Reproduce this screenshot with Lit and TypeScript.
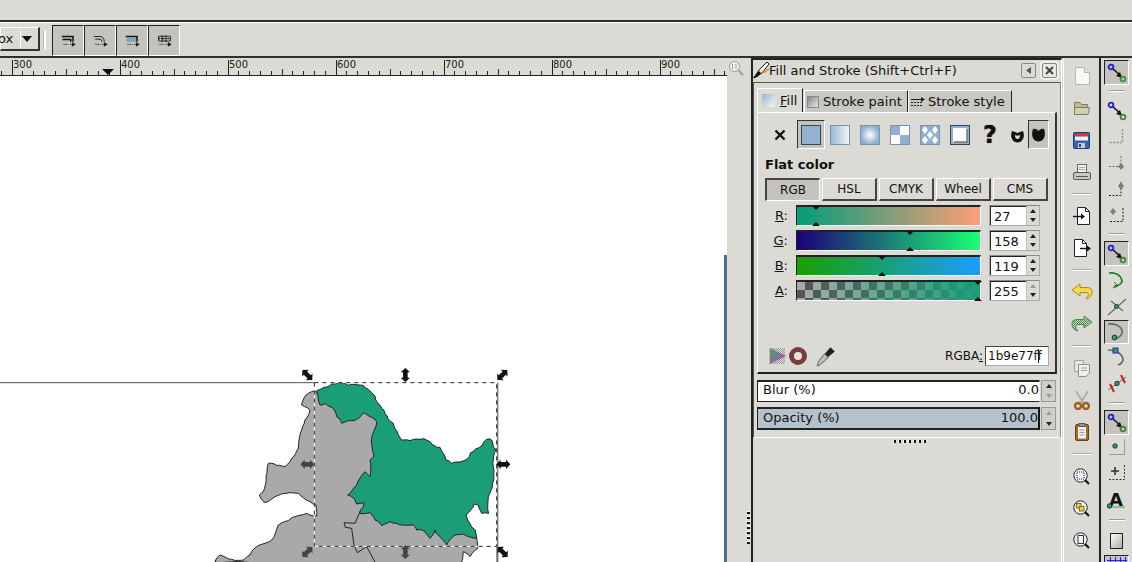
import { LitElement, html, css, svg } from "lit";
import { customElement } from "lit/decorators.js";

const GREEN = "M350,92 L372,82 395,72 420,68 445,76 470,74 490,76 505,88 515,98 525,108 530,125 545,145 555,160 565,178 580,190 592,215 605,240 630,242 660,238 672,236 690,245 705,258 720,262 730,280 738,300 755,310 780,306 800,298 812,278 825,268 845,258 860,238 875,240 880,262 888,268 880,300 882,330 878,370 865,410 866,460 845,460 835,435 822,432 812,450 798,465 810,490 826,510 830,535 790,522 765,525 740,555 720,530 705,510 690,535 670,512 650,510 640,495 610,495 590,490 570,485 545,497 525,480 510,458 478,460 490,440 492,428 470,432 465,420 443,405 470,375 495,335 510,350 510,300 522,288 515,235 530,185 510,170 490,158 470,178 445,182 425,190 410,170 400,145 375,130 360,135 Z";
const GREY = "M345,92 L325,100 310,120 305,135 330,150 315,180 305,210 295,265 275,295 255,320 230,316 205,310 198,350 190,395 178,405 195,428 225,410 260,400 295,400 330,425 348,435 350,468 320,460 290,468 265,482 235,495 215,540 170,560 150,585 130,600 95,598 60,585 45,606 785,620 785,606 790,575 810,590 833,565 830,535 700,420 600,300 540,200 480,120 400,105 360,105 Z";

/* Turn a straight polygon into a rugged boundary line, always the same way. */
function roughen(d: string, amp: number): string {
  const nums = d.match(/-?\d+(\.\d+)?/g)!.map(Number);
  const pts: [number, number][] = [];
  for (let i = 0; i < nums.length; i += 2) pts.push([nums[i], nums[i + 1]]);
  pts.push(pts[0]);
  let out = `M${pts[0][0]},${pts[0][1]}`;
  let k = 1;
  for (let i = 1; i < pts.length; i++) {
    const [ax, ay] = pts[i - 1];
    const [bx, by] = pts[i];
    const len = Math.hypot(bx - ax, by - ay) || 1;
    const n = Math.max(1, Math.round(len / 10));
    const nx = -(by - ay) / len;
    const ny = (bx - ax) / len;
    for (let j = 1; j <= n; j++) {
      const t = j / n;
      const off = j === n ? 0 : Math.sin(k * 12.9898) * amp;
      k++;
      out += ` L${(ax + (bx - ax) * t + nx * off).toFixed(1)},${(ay + (by - ay) * t + ny * off).toFixed(1)}`;
    }
  }
  return out + " Z";
}

const dk = "#111";
const arr = (x: number, y: number, rot: number, color: string) =>
  svg`<g transform="translate(${x} ${y}) rotate(${rot})" fill="${color}">
    <path d="M-21,0 L-8,-14 L-8,-7 L8,-7 L8,-14 L21,0 L8,14 L8,7 L-8,7 L-8,14 Z"></path></g>`;

const ruler = () => {
  const ticks = [];
  for (let i = 0; i < 68; i++) {
    const x = 0.2 + i * 10.8 + 0.5;
    const major = (i - 1) % 10 === 0;
    const mid = (i - 1) % 5 === 0 && !major;
    ticks.push(svg`<rect x=${Math.round(x)} y=${major ? 2 : mid ? 11 : 13} width="1" height=${major ? 15 : mid ? 6 : 4} fill="#222"></rect>`);
  }
  return svg`<svg class="ruler-svg" width="727" height="18">${ticks}<path d="M102,11 L114,11 L108,17 Z" fill="#111"></path></svg>`;
};

const pathToolIcon = (n: number) => {
  const head = svg`<path d="M3,13.5 H10 M12,13.5 H16 M15,11 L19,13.5 L15,16 Z" stroke="#111" fill="#111" stroke-dasharray="2 1"></path>`;
  const tops = [
    svg`<path d="M1,3 H16 V10 M2,7 H13 V10" fill="none" stroke="#111" stroke-width="2"></path>`,
    svg`<path d="M1,3 H9 Q15,3 15,10 M3,6.5 H8 Q12,6.5 12,10" fill="none" stroke="#222" stroke-width="1.3"></path>`,
    svg`<path d="M2,5 H15 V10 H2 Z" fill="#7da3cc"></path><path d="M1,3 H16 V10" fill="none" stroke="#111" stroke-width="2"></path>`,
    svg`<path d="M2,2.5 H18 V9 H2 Z" fill="none" stroke="#111"></path><path d="M2,5.5 H18 M7,2 V10 M12,2 V10" stroke="#111" stroke-width="2" stroke-dasharray="2 1"></path>`,
  ];
  return svg`<svg width="15" height="14" viewBox="0 0 20 18">${tops[n]}${head}</svg>`;
};

const paintIcons: Record<string, any> = {
  x: svg`<svg width="14" height="14" viewBox="0 0 14 14"><path d="M2.5,2.5 L11.5,11.5 M11.5,2.5 L2.5,11.5" stroke="#111" stroke-width="2.4"></path></svg>`,
  flat: svg`<svg width="20" height="20"><rect x=".5" y=".5" width="19" height="19" fill="#93b1d0" stroke="#33475c"></rect></svg>`,
  lin: svg`<svg width="20" height="20"><defs><linearGradient id="pl"><stop offset="0" stop-color="#9ab6d3"></stop><stop offset="1" stop-color="#f4f7fa"></stop></linearGradient></defs><rect x=".5" y=".5" width="19" height="19" fill="url(#pl)" stroke="#7a93ad"></rect></svg>`,
  rad: svg`<svg width="20" height="20"><defs><radialGradient id="pr"><stop offset="0" stop-color="#fff"></stop><stop offset="1" stop-color="#8eaecf"></stop></radialGradient></defs><rect x=".5" y=".5" width="19" height="19" fill="url(#pr)" stroke="#7a93ad"></rect></svg>`,
  mesh: svg`<svg width="20" height="20"><rect width="20" height="20" fill="#fff"></rect><rect width="10" height="10" fill="#8fb0d2"></rect><rect x="10" y="10" width="10" height="10" fill="#8fb0d2"></rect><rect x=".5" y=".5" width="19" height="19" fill="none" stroke="#7a93ad"></rect></svg>`,
  pat: svg`<svg width="20" height="20"><rect width="20" height="20" fill="#8fb0d2"></rect><path d="M5,1 L8,5 L5,9 L2,5 Z M15,1 L18,5 L15,9 L12,5 Z M10,6 L13,10 L10,14 L7,10 Z M5,11 L8,15 L5,19 L2,15 Z M15,11 L18,15 L15,19 L12,15 Z" fill="#fff"></path><rect x=".5" y=".5" width="19" height="19" fill="none" stroke="#7a93ad"></rect></svg>`,
  swatch: svg`<svg width="20" height="20"><rect x=".5" y=".5" width="19" height="19" fill="#8fb0d2" stroke="#33475c"></rect><rect x="3" y="3" width="14" height="14" fill="#fff"></rect><path d="M4,17 H17 V4" fill="none" stroke="#777" stroke-width="1.5"></path></svg>`,
  even: svg`<svg width="13" height="13" viewBox="0 0 13 13"><path fill-rule="evenodd" d="M1,1 L4,2 L6.5,3 L9,2 L12,1 C13.5,5 13,8 11,10.5 C9,13 4,13 2,10.5 C0,8 -.5,5 1,1 Z M4.2,5 C3.8,7 4.6,9 6.5,9 C8.4,9 9.2,7 8.8,5 L6.5,5.8 Z" fill="#111"></path></svg>`,
  nz: svg`<svg width="13" height="14" viewBox="0 0 13 14"><path d="M1,1 C3,.5 5,1.5 6.5,3 C8,1.5 10,.5 12,1 C13.5,5 13,9 11,11.5 C9,14 4,14 2,11.5 C0,9 -.5,5 1,1 Z" fill="#111"></path></svg>`,
};

const cmdIcons: Record<string, any> = {
  new: svg`<svg width="16" height="18" viewBox="0 0 16 18"><path d="M1.5,.5 H10.5 L15.5,5.5 V17.5 H1.5 Z" fill="#f8f8f6" stroke="#b5b5ae"></path><path d="M10.5,.5 V5.5 H15.5" fill="#e3e3de" stroke="#b5b5ae"></path></svg>`,
  open: svg`<svg width="18" height="15" viewBox="0 0 18 15"><path d="M1.5,1.5 H7 L8.5,3.5 H14.5 V13.5 H1.5 Z" fill="#b9bd93" stroke="#7b7e62"></path><path d="M1.5,6.5 H16.5 L15,13.5 H1.5 Z" fill="#cfd2ad" stroke="#7b7e62"></path></svg>`,
  save: svg`<svg width="17" height="17" viewBox="0 0 17 17"><rect x=".5" y=".5" width="16" height="16" rx="1" fill="#3465a4" stroke="#1d3f70"></rect><rect x="2" y="1.5" width="13" height="3" fill="#d33"></rect><rect x="2" y="4.5" width="13" height="4" fill="#eee"></rect><rect x="5" y="11" width="7" height="5" fill="#ccc"></rect><rect x="6" y="12" width="2" height="3" fill="#345"></rect></svg>`,
  print: svg`<svg width="18" height="17" viewBox="0 0 18 17"><rect x="4.5" y=".5" width="9" height="8" fill="#f2f2f0" stroke="#666"></rect><path d="M6,3.5 H12 M6,5.5 H12" stroke="#aaa"></path><rect x=".5" y="8.5" width="17" height="7" rx="1.5" fill="#c9c9c4" stroke="#555"></rect><path d="M3,12.5 H15" stroke="#555"></path></svg>`,
  imp: svg`<svg width="18" height="18" viewBox="0 0 18 18"><path d="M4.5,.5 H12.5 L16.5,4.5 V17.5 H4.5 Z" fill="#fff" stroke="#222"></path><path d="M12.5,.5 V4.5 H16.5" fill="none" stroke="#222"></path><path d="M0,9.5 H10" stroke="#111" stroke-width="1.4"></path><path d="M8,6.5 L12,9.5 L8,12.5 Z" fill="#111"></path></svg>`,
  exp: svg`<svg width="18" height="18" viewBox="0 0 18 18"><path d="M1.5,.5 H9.5 L13.5,4.5 V17.5 H1.5 Z" fill="#fff" stroke="#222"></path><path d="M9.5,.5 V4.5 H13.5" fill="none" stroke="#222"></path><path d="M7,9.5 H15" stroke="#111" stroke-width="1.4"></path><path d="M14,6.5 L18,9.5 L14,12.5 Z" fill="#111"></path></svg>`,
  undo: svg`<svg width="22" height="18" viewBox="0 0 22 18"><path d="M9,1 L1,7 L9,13 V9.5 H15 C17,9.5 18,11 17,13 L15,16 C20,15 21.5,11 21,8 C20.5,5 18,4.5 15,4.5 H9 Z" fill="#f5d949" stroke="#a88a1a"></path></svg>`,
  redo: svg`<svg width="22" height="18" viewBox="0 0 22 18"><defs><pattern id="rd" width="2" height="2" patternUnits="userSpaceOnUse"><rect width="2" height="2" fill="#dbdad5"></rect><rect width="1" height="1" fill="#3f8a3f"></rect><rect x="1" y="1" width="1" height="1" fill="#3f8a3f"></rect></pattern></defs><path d="M13,1 L21,7 L13,13 V9.5 H7 C5,9.5 4,11 5,13 L7,16 C2,15 .5,11 1,8 C1.5,5 4,4.5 7,4.5 H13 Z" fill="url(#rd)" stroke="#4d8a4d"></path></svg>`,
  dup: svg`<svg width="18" height="18" viewBox="0 0 18 18" opacity=".55"><path d="M1.5,1.5 H10.5 V12.5 H1.5 Z" fill="#eee" stroke="#777"></path><path d="M5.5,5.5 H16.5 V14 L13,17.5 H5.5 Z" fill="#fff" stroke="#555"></path><path d="M8,9 H14 M8,11.5 H14" stroke="#777"></path></svg>`,
  cut: svg`<svg width="16" height="20" viewBox="0 0 16 20"><path d="M2,1 L10,14 M14,1 L6,14" stroke="#aaa" stroke-width="1.6"></path><circle cx="4" cy="16" r="3" fill="none" stroke="#a0601a" stroke-width="2.4"></circle><circle cx="12" cy="16" r="3" fill="none" stroke="#a0601a" stroke-width="2.4"></circle></svg>`,
  paste: svg`<svg width="14" height="18" viewBox="0 0 14 18"><rect x=".5" y="1.5" width="13" height="16" rx="1.5" fill="#a5692a" stroke="#6b4216"></rect><path d="M3,3.5 H11 V15.5 H3 Z" fill="#f2f2f0"></path><path d="M4.5,7 H9.5 M4.5,9.5 H9.5 M4.5,12 H9.5" stroke="#999"></path><rect x="4" y=".5" width="6" height="3" fill="#999" stroke="#555"></rect></svg>`,
  zsel: svg`<svg width="17" height="17" viewBox="0 0 17 17"><circle cx="7.5" cy="7.5" r="6.7" fill="#eef1f4" stroke="#222"></circle><rect x="4" y="4" width="7" height="7" fill="none" stroke="#222" stroke-dasharray="1 1"></rect><path d="M12,12 L16,16" stroke="#111" stroke-width="2.2"></path></svg>`,
  zdraw: svg`<svg width="17" height="17" viewBox="0 0 17 17"><circle cx="7.5" cy="7.5" r="6.7" fill="#eef1f4" stroke="#222"></circle><rect x="3.5" y="3.5" width="4.5" height="4.5" fill="#e5c94a" stroke="#8a6b10"></rect><rect x="6.5" y="6.5" width="4.5" height="4.5" fill="#e5c94a" stroke="#8a6b10"></rect><path d="M12,12 L16,16" stroke="#111" stroke-width="2.2"></path></svg>`,
  zpage: svg`<svg width="17" height="17" viewBox="0 0 17 17"><circle cx="7.5" cy="7.5" r="6.7" fill="#eef1f4" stroke="#222"></circle><rect x="5" y="3.5" width="5.5" height="8" fill="#fff" stroke="#333"></rect><path d="M12,12 L16,16" stroke="#111" stroke-width="2.2"></path></svg>`,
};

const nodePair = (a: string, b: string) => svg`<svg width="20" height="20" viewBox="0 0 20 20"><path d="M5,5 L14,13" stroke="#111" stroke-width="1.5"></path><path d="M15,15 L9,13 L13,9 Z" fill="#111"></path><circle cx="4" cy="4" r="2.4" fill="none" stroke=${a} stroke-width="1.8"></circle><circle cx="16" cy="16" r="2.4" fill="none" stroke=${b} stroke-width="1.8"></circle></svg>`;

const snapIcons: Record<string, any> = {
  pair: nodePair("#2020d8", "#3a8a3a"),
  bbox: svg`<svg width="20" height="20" viewBox="0 0 20 20"><path d="M15.5,2 V15.5 H2" fill="none" stroke="#7d9a7d" stroke-dasharray="2 1.5" stroke-width="1.3"></path></svg>`,
  bedge: svg`<svg width="20" height="20" viewBox="0 0 20 20"><path d="M2,12.5 H14 M14,2 V11" fill="none" stroke="#667" stroke-dasharray="2 1.5"></path><path d="M14,9 L17,12.5 L14,16 L11,12.5 Z" fill="#6a8a6a"></path></svg>`,
  bcorner: svg`<svg width="20" height="20" viewBox="0 0 20 20"><path d="M2,15.5 H14 V2" fill="none" stroke="#222" stroke-dasharray="2 1.5"></path><path d="M14,2 L17,6 L14,10 L11,6 Z" fill="#6a8a6a"></path></svg>`,
  bmid: svg`<svg width="20" height="20" viewBox="0 0 20 20"><path d="M3,16.5 H16 V3" fill="none" stroke="#222" stroke-dasharray="2 1.5"></path><path d="M6,3 L9,6.5 L6,10 L3,6.5 Z" fill="#6a8a6a"></path></svg>`,
  path: svg`<svg width="20" height="20" viewBox="0 0 20 20"><path d="M2,4 C8,3 14,6 15,12 C15,15 11,17 7,17" fill="none" stroke="#1c7a1c" stroke-width="1.7"></path><path d="M7,13 L11,17 L6,19" fill="none" stroke="#1c7a1c"></path></svg>`,
  inter: svg`<svg width="20" height="20" viewBox="0 0 20 20"><path d="M1,19 L19,3 M4,5 L16,15" stroke="#666" stroke-width="1.2"></path><circle cx="9.5" cy="10.5" r="2" fill="#3a9a5a" stroke="#135"></circle></svg>`,
  node: svg`<svg width="20" height="20" viewBox="0 0 20 20"><path d="M1,2 C9,1 16,5 15,11 C14,15 10,17 6,16" fill="none" stroke="#666" stroke-width="1.7"></path><circle cx="7.5" cy="15.5" r="2.4" fill="#3a9a5a" stroke="#135"></circle></svg>`,
  smooth: svg`<svg width="20" height="20" viewBox="0 0 20 20"><path d="M1,3 C8,3 15,6 16,12 C16,15 14,17 11,18" fill="none" stroke="#666" stroke-width="1.7"></path><rect x="6" y="1" width="5" height="5" fill="#3a9a5a" stroke="#2828c8"></rect></svg>`,
  mid: svg`<svg width="20" height="20" viewBox="0 0 20 20"><path d="M1,17 L19,4" stroke="#666"></path><path d="M3,11 L7,19 M14,2 L18,10" stroke="#c82020" stroke-width="2"></path><circle cx="10" cy="10.5" r="2.2" fill="#3a9a5a" stroke="#135"></circle></svg>`,
  center: svg`<svg width="20" height="20" viewBox="0 0 20 20"><path d="M2,17.5 H17.5 V2" fill="none" stroke="#999"></path><circle cx="8" cy="9" r="2.2" fill="#3a9a5a" stroke="#135"></circle></svg>`,
  rot: svg`<svg width="20" height="20" viewBox="0 0 20 20"><path d="M2,17.5 H17.5 V2" fill="none" stroke="#333" stroke-dasharray="2 1.5"></path><path d="M4,9 H12 M8,5 V13" stroke="#333" stroke-width="1.6"></path></svg>`,
  text: svg`<svg width="24" height="24" viewBox="0 0 24 24"><text x="4" y="18" class="big-a">A</text><path d="M4,19 H20" stroke="#3a9a5a"></path><circle cx="4.5" cy="18" r="2.2" fill="#3a9a5a" stroke="#135"></circle></svg>`,
  page: svg`<svg width="13" height="16" viewBox="0 0 13 16"><defs><linearGradient id="pg" x1="0" x2="1" y1="0" y2="1"><stop offset="0" stop-color="#fff"></stop><stop offset="1" stop-color="#aaa"></stop></linearGradient></defs><rect x=".5" y=".5" width="12" height="15" fill="url(#pg)" stroke="#222"></rect></svg>`,
  grid: svg`<svg width="20" height="12" viewBox="0 0 20 12"><path d="M0,3.5 H20 M0,8.5 H20 M3.5,0 V12 M8.5,0 V12 M13.5,0 V12 M18.5,0 V12" stroke="#2020e0"></path></svg>`,
};

@customElement("app-root")
export class AppRoot extends LitElement {
  static styles = css`
    :host { display: block; width: 1132px; height: 562px; overflow: hidden; background: #dbdad5;
      font-family: "DejaVu Sans", sans-serif; font-size: 13px; color: #111; }
    .top { height: 20px; border-bottom: 2px solid #2e2e2c; }
    .toolbar { height: 33px; border-top: 1px solid #fff; border-bottom: 2px solid #2e2e2c; display: flex; align-items: flex-start; background: #dbdad5; }
    .combo { margin-top: 4px; width: 40px; height: 24px; box-sizing: border-box; border: 1px solid #fff; border-right: 2px solid #333; border-bottom: 2px solid #333; display: flex; align-items: center; justify-content: space-between; padding: 0 6px 0 0; }
    .combo .tx { margin-left: -3px; }
    .combo .sp { width: 1px; height: 16px; background: #fff; margin-left: 5px; }
    .combo .tri { width: 0; height: 0; border: 5px solid transparent; border-top: 6px solid #111; border-bottom: 0; }
    .tsep { width: 2px; height: 20px; background: #fff; border-left: 1px solid #bbb; margin: 7px 6px 0 3px; }
    .tbtn { width: 32px; height: 31px; box-sizing: border-box; margin-top: 2px; background: #c4c3be; border: 1px solid #fff; border-top-color: #222; border-left-color: #222; display: flex; align-items: center; justify-content: center; }
    .main { height: 504px; display: flex; }
    .canvas-col { width: 727px; flex: none; display: flex; flex-direction: column; position: relative; }
    .ruler { height: 17px; position: relative; border-bottom: 1px solid #222; overflow: hidden; flex: none; }
    .ruler-svg { position: absolute; left: 0; top: 0; }
    .rl { position: absolute; top: 1px; font-size: 10px; line-height: 12px; color: #222; }
    .canvas { flex: 1; background: #fff; position: relative; overflow: hidden; }
    .canvas .scroll { position: absolute; right: 0; top: 179px; width: 3px; bottom: 0; background: #4b6c94; }
    .map { position: absolute; left: 200px; top: 284px; overflow: visible; }
    .gutter { width: 24px; flex: none; position: relative; }
    .zoom-ic { position: absolute; left: 1px; top: 2px; }
    .grip { position: absolute; right: 1px; top: 453px; width: 3px; height: 35px;
      background: repeating-linear-gradient(#fff 0 1px, #111 1px 3px, transparent 3px 5px); }
    .dialog { width: 311px; flex: none; box-sizing: border-box; border-top: 2px solid #222; border-left: 2px solid #222; border-right: 1px solid #fff; display: flex; flex-direction: column; height: 504px; }
    .title { height: 20px; display: flex; align-items: center; flex: none; }
    .title .app { margin-left: -1px; }
    .title .t { margin-left: -1px; flex: 1; white-space: nowrap; }
    .wbtn { width: 13px; height: 13px; border: 1px solid #888; border-radius: 2px; display: flex; align-items: center; justify-content: center; margin-right: 6px; }
    .wbtn.close { width: 13px; height: 13px; margin-right: 4px; background: #e9e8e4; box-shadow: 0 0 0 2px #eeeeea; }
    .frame { margin: 2px 0 0 0; border: 1px solid #555; border-right-color: #8a8a86; border-bottom-color: #fff; padding: 5px 0 0 3px; display: flex; flex-direction: column; height: 356px; box-sizing: border-box; flex: none; }
    .tabs { display: flex; height: 24px; align-items: flex-end; flex: none; }
    .tab { display: flex; align-items: center; height: 22px; width: 104px; flex: none; box-sizing: border-box; border: 1px solid #fff; border-right: 1px solid #222; border-bottom: 0; gap: 2px; padding: 0 0 0 2px; background: #c9c8c3; white-space: nowrap; }
    .tab.on { background: #dbdad5; height: 24px; padding: 0 0 0 4px; gap: 5px; width: 46px; margin-right: 1px; }
    u { text-decoration-thickness: 1px; }
    .tab .sw1 { width: 13px; height: 13px; background: linear-gradient(135deg,#9ab6d3,#f2f5f8); }
    .tab .sw2 { width: 12px; height: 12px; background: linear-gradient(135deg,#888,#e6e6e2); border: 1px solid #888; box-sizing: border-box; margin-right: 2px; }
    .tab .ssty { margin-right: 1px; }
    .panel { height: 262px; flex: none; box-sizing: border-box; border: 1px solid #fff; border-right: 2px solid #333; border-bottom: 2px solid #222; padding: 7px 5px 0 7px; width: 300px; display: flex; flex-direction: column; }
    .paints { display: flex; align-items: center; height: 29px; flex: none; }
    .pc { width: 30px; height: 28px; display: flex; align-items: center; justify-content: center; flex: none; box-sizing: border-box; }
    .pc.x { width: 28px; margin-left: 1px; }
    .pc.on { height: 29px; background: #c4c3be; border: 1px solid #fff; border-top-color: #333; border-left-color: #333; }
    .pc.flat { margin-left: 3px; width: 28px; }
    .pc.q { font-size: 24px; font-weight: bold; line-height: 28px; text-shadow: 0 0 1px #333; }
    .pc.u { width: 24px; padding-top: 3px; }
    .pc.nz { width: 21px; margin-left: -1px; }
    .flatlbl { font-weight: bold; margin-top: 8px; line-height: 16px; height: 16px; flex: none; }
    .modes { display: flex; gap: 2px; margin-top: 5px; flex: none; }
    .mode { width: 55px; height: 23px; flex: none; box-sizing: border-box; border: 1px solid #fff; border-right: 2px solid #444; border-bottom: 2px solid #444; display: flex; align-items: center; justify-content: center; font-size: 12px; }
    .mode.on { background: #c4c3be; border-color: #fff; border-top: 2px solid #444; border-left: 2px solid #444; border-right: 1px solid #fff; border-bottom: 1px solid #fff; }
    .rows { margin-top: 4px; display: flex; flex-direction: column; gap: 4px; flex: none; }
    .row { display: flex; align-items: center; height: 21px; }
    .lab { width: 31px; text-align: right; padding-right: 8px; flex: none; box-sizing: border-box; }
    .slider { width: 185px; height: 21px; box-sizing: border-box; margin-right: 8px; border: 1px solid #fff; border-top: 2px solid #222; border-left: 1px solid #222; position: relative; flex: none; }
    .slider.r { background: linear-gradient(90deg,#009e78,#ff9e78); }
    .slider.g { background: linear-gradient(90deg,#1b0077,#1bff77); }
    .slider.b { background: linear-gradient(90deg,#1b9e00,#1b9eff); }
    .slider.a { background: linear-gradient(90deg,rgba(27,158,119,0),#1b9e77),
      repeating-conic-gradient(#555 0 25%, #aaa 0 50%) 0 0 / 16px 16px; }
    .mk { position: absolute; width: 0; height: 0; border: 4px solid transparent; transform: translateX(-4px); }
    .mk.t { top: -1px; border-top: 4px solid #111; border-bottom: 0; }
    .mk.bm { bottom: -1px; border-bottom: 4px solid #111; border-top: 0; }
    .spin { width: 51px; height: 21px; box-sizing: border-box; border: 1px solid #aaa; border-top-color: #888; display: flex; flex: none; background: #fff; }
    .spin .v { flex: 1; padding-left: 3px; line-height: 19px; border-left: 1px solid #222; border-top: 1px solid #222; }
    .arrows { width: 12px; flex: none; background: #dbdad5; display: flex; flex-direction: column; align-items: center; justify-content: space-around; border-left: 1px solid #bbb; }
    .a-up { width: 0; height: 0; border: 3px solid transparent; border-bottom: 4px solid #222; border-top: 0; }
    .a-dn { width: 0; height: 0; border: 3px solid transparent; border-top: 4px solid #222; border-bottom: 0; }
    .a-up.dim { border-bottom-color: #999; }
    .a-dn.dim { border-top-color: #999; }
    .bottom { margin-top: auto; margin-bottom: 5px; display: flex; align-items: center; height: 22px; padding-left: 3px; flex: none; }
    .bottom .ri { font-size: 12px; margin-left: auto; margin-right: 2px; }
    .bottom .drop { margin-left: 7px; }
    .hexin { width: 64px; height: 20px; box-sizing: border-box; background: #fff; border: 1px solid #aaa; border-top-color: #444; border-left-color: #444; line-height: 18px; padding-left: 2px; font-size: 12px; position: relative; margin-right: 1px; }
    .caret { position: absolute; left: 52px; top: 2px; width: 1px; height: 14px; background: #111; }
    .wide { display: flex; margin-top: 5px; width: 299px; flex: none; height: 23px; }
    .wide.first { margin-top: 6px; height: 22px; }
    .wide .box { flex: 1; box-sizing: border-box; background: #fff; border: 1px solid #222; border-top-width: 2px; border-right-color: #fff; display: flex; justify-content: space-between; padding: 0 0 0 5px; line-height: 15px; white-space: nowrap; }
    .wide .box.fill { background: #b5c1cb; border-right: 2px solid #111; border-bottom-width: 2px; line-height: 17px; }
    .wide .arrows { width: 13px; border: 1px solid #999; background: #cfcec9; margin-left: 1px; flex: none; }
    .handle { height: 3px; margin: 2px 0 0 140px; width: 33px; flex: none;
      background: repeating-linear-gradient(90deg,#fff 0 1px,#111 1px 3px,transparent 3px 5px); }
    .cmd { width: 36px; flex: none; margin-left: 1px; border-left: 1px solid #fff; display: flex; flex-direction: column; align-items: center; padding-top: 2px; box-sizing: border-box; height: 504px; overflow: hidden; }
    .ci { height: 32px; flex: none; display: flex; align-items: center; justify-content: center; width: 100%; }
    .csep { height: 12px; flex: none; width: 20px; display: flex; align-items: center; }
    .csep::after { content: ""; display: block; width: 100%; height: 1px; background: #fff; border-top: 1px solid #aaa; }
    .snap { flex: 1; border-left: 2px solid #222; display: flex; flex-direction: column; align-items: center; box-sizing: border-box; height: 504px; overflow: hidden; padding-top: 2px; }
    .si { flex: none; width: 25px; display: flex; align-items: center; justify-content: center; box-sizing: border-box; }
    .si.on { background: #c4c3be; border: 1px solid #fff; border-top-color: #222; border-left-color: #222; }
    .ssep { flex: none; width: 16px; height: 0; border-top: 1px solid #999; border-bottom: 1px solid #fff; align-self: center; }
    .big-a { font: bold 18px "DejaVu Sans", sans-serif; fill: #111; }
  `;

  private renderSlider(cls: string, ch: string, pos: number, val: string, dimUp = false) {
    return html`<div class="row">
      <div class="lab"><u>${ch}</u>:</div>
      <div class="slider ${cls}">
        <div class="mk t" style="left:${pos}%"></div><div class="mk bm" style="left:${pos}%"></div>
      </div>
      <div class="spin"><div class="v">${val}</div><div class="arrows"><div class="a-up ${dimUp ? "dim" : ""}"></div><div class="a-dn"></div></div></div>
    </div>`;
  }

  render() {
    const cmd = ["new","open","save","print","-","imp","exp","-","undo","redo","-","dup","cut","paste","-","zsel","zdraw","zpage"];
    const snap: [string, number, boolean][] = [
      ["pair",25,true],["-",12,false],["pair",27,false],["bbox",26,false],["bedge",27,false],["bcorner",25,false],["bmid",25,false],
      ["-",14,false],["pair",25,true],["path",26,false],["inter",28,false],["node",24,true],["smooth",26,false],["mid",26,false],
      ["-",14,false],["pair",25,true],["center",23,false],["rot",28,false],["text",27,false],["-",14,false],["page",28,false],["grid",16,true],
    ];
    const labels = [[300,11],[400,119],[500,227],[600,335],[700,443],[800,551],[900,659]];
    return html`
      <div class="top"></div>
      <div class="toolbar">
        <div class="combo"><span class="tx">ox</span><span class="sp"></span><span class="tri"></span></div>
        <div class="tsep"></div>
        ${[0,1,2,3].map(i => html`<div class="tbtn">${pathToolIcon(i)}</div>`)}
      </div>
      <div class="main">
        <div class="canvas-col">
          <div class="ruler">${ruler()}${labels.map(([t,x]) => html`<span class="rl" style="left:${x + 2}px">${t}</span>`)}</div>
          <div class="canvas">
            <svg class="map" width="320" height="202" viewBox="0 0 960 606">
              <path d="M-600,68 H342" stroke="#555" stroke-width="3" fill="none"></path>
              <path d="M892,68 V606" stroke="#666" stroke-width="6" fill="none"></path>
              <path d=${roughen(GREY, 2.5)} fill="#a9a9a9" stroke="#222" stroke-width="3" stroke-linejoin="round"></path>
              <path d="M478,460 L465,490 L432,488 L436,502 L455,505 L462,555 L472,578 L500,560 L525,606" fill="none" stroke="#222" stroke-width="3"></path>
              <path d=${roughen(GREEN, 2.5)} fill="#1b9e77" stroke="#222" stroke-width="3" stroke-linejoin="round"></path>
              <rect x="343" y="68" width="547" height="491" fill="none" stroke="#fff" stroke-width="3"></rect>
              <rect x="343" y="68" width="547" height="491" fill="none" stroke="#222" stroke-width="3" stroke-dasharray="12 12"></rect>
              ${arr(322,45,45,dk)}${arr(616,45,90,dk)}${arr(907,45,135,dk)}
              ${arr(322,313,0,"#444")}${arr(910,313,0,dk)}
              ${arr(322,576,135,"#444")}${arr(616,576,90,"#444")}${arr(908,576,45,dk)}
            </svg>
            <div class="scroll"></div>
          </div>
        </div>
        <div class="gutter">
          <svg class="zoom-ic" width="16" height="16" viewBox="0 0 16 16"><circle cx="6.5" cy="6.5" r="5" fill="#f2f2f0" stroke="#999"></circle><path d="M10.5,10.5 L15,15" stroke="#999" stroke-width="2"></path><path d="M4.5,4 V9 M8,4 V9" stroke="#999"></path></svg>
          <div class="grip"></div>
        </div>
        <div class="dialog">
          <div class="title">
            <svg class="app" width="18" height="18" viewBox="0 0 18 18"><path d="M2,17 L7,9 L15,1 L17,3 L10,12 Z" fill="#fff" stroke="#111"></path><path d="M1,17 C3,14 5,12 7,10 L9,12 C7,15 4,17 1,17 Z" fill="#111"></path><path d="M11,12 L17,8" stroke="#d9a520" stroke-width="2"></path></svg>
            <span class="t">Fill and Stroke (Shift+Ctrl+F)</span>
            <div class="wbtn"><svg width="7" height="7"><path d="M6,0 L1,3.5 L6,7 Z" fill="#555"></path></svg></div>
            <div class="wbtn close"><svg width="9" height="9"><path d="M1,1 L8,8 M8,1 L1,8" stroke="#444" stroke-width="2"></path></svg></div>
          </div>
          <div class="frame">
            <div class="tabs">
              <div class="tab on"><span class="sw1"></span><span><u>F</u>ill</span></div>
              <div class="tab"><span class="sw2"></span><span>Stroke paint</span></div>
              <div class="tab"><svg class="ssty" width="14" height="12" viewBox="0 0 14 12"><path d="M0,3.5 H12" stroke="#222"></path><path d="M0,6.5 H12 M0,9.5 H12" stroke="#222" stroke-dasharray="2 1"></path><path d="M10,1 L14,3.5 L10,6 Z" fill="#222"></path></svg><span>Stroke style</span></div>
            </div>
            <div class="panel">
              <div class="paints">
                <div class="pc x">${paintIcons.x}</div>
                <div class="pc on flat">${paintIcons.flat}</div>
                <div class="pc">${paintIcons.lin}</div>
                <div class="pc">${paintIcons.rad}</div>
                <div class="pc">${paintIcons.mesh}</div>
                <div class="pc">${paintIcons.pat}</div>
                <div class="pc">${paintIcons.swatch}</div>
                <div class="pc q">?</div>
                <div class="pc u">${paintIcons.even}</div>
                <div class="pc on nz">${paintIcons.nz}</div>
              </div>
              <div class="flatlbl">Flat color</div>
              <div class="modes">
                <div class="mode on">RGB</div><div class="mode">HSL</div><div class="mode">CMYK</div><div class="mode">Wheel</div><div class="mode">CMS</div>
              </div>
              <div class="rows">
                ${this.renderSlider("r","R",10.5,"27")}
                ${this.renderSlider("g","G",62,"158")}
                ${this.renderSlider("b","B",46.5,"119")}
                ${this.renderSlider("a","A",99,"255",true)}
              </div>
              <div class="bottom">
                <svg width="20" height="20" viewBox="0 0 20 20"><defs><pattern id="ck" width="2" height="2" patternUnits="userSpaceOnUse"><rect width="2" height="2" fill="#dbdad5"></rect><rect width="1" height="1" fill="#999"></rect><rect x="1" y="1" width="1" height="1" fill="#999"></rect></pattern><linearGradient id="tg" x1="0" x2="1" y1="0" y2="1"><stop offset="0" stop-color="#2a9a4a"></stop><stop offset=".6" stop-color="#7a5a9a"></stop><stop offset="1" stop-color="#a33"></stop></linearGradient></defs><rect x="1" y="2" width="16" height="16" fill="url(#ck)"></rect><path d="M2,2 L18,10 L2,18 Z" fill="url(#tg)" opacity=".8"></path></svg>
                <svg width="20" height="20" viewBox="0 0 20 20"><defs><pattern id="rg" width="2" height="2" patternUnits="userSpaceOnUse"><rect width="2" height="2" fill="#aa3535"></rect><rect width="1" height="1" fill="#444"></rect><rect x="1" y="1" width="1" height="1" fill="#444"></rect></pattern></defs><circle cx="10" cy="10" r="6.5" fill="#e6e6e2" stroke="url(#rg)" stroke-width="5"></circle></svg>
                <svg class="drop" width="22" height="22" viewBox="0 0 20 20"><path d="M2,19 C2,15 6,11 9,8 L12,11 C9,14 6,18 2,19 Z" fill="#c0c0bc" stroke="#777"></path><path d="M9,8 L14,2 L18,6 L12,11 Z" fill="#222"></path></svg>
                <span class="ri">RGBA<u>:</u></span>
                <div class="hexin">1b9e77ff<span class="caret"></span></div>
              </div>
            </div>
            <div class="wide first">
              <div class="box"><span>Blur (%)</span><span>0.0</span></div>
              <div class="arrows"><div class="a-up"></div><div class="a-dn dim"></div></div>
            </div>
            <div class="wide">
              <div class="box fill"><span>Opacity (%)</span><span>100.0</span></div>
              <div class="arrows"><div class="a-up dim"></div><div class="a-dn"></div></div>
            </div>
          </div>
          <div class="handle"></div>
        </div>
        <div class="cmd">
          ${cmd.map(c => c === "-" ? html`<div class="csep"></div>` : html`<div class="ci">${cmdIcons[c]}</div>`)}
        </div>
        <div class="snap">
          ${snap.map(([c,h,on]) => c === "-" ? html`<div class="ssep" style="margin:${(h-2)/2}px 0"></div>` : html`<div class="si ${on ? "on" : ""}" style="height:${h}px">${snapIcons[c]}</div>`)}
        </div>
      </div>
    `;
  }
}
